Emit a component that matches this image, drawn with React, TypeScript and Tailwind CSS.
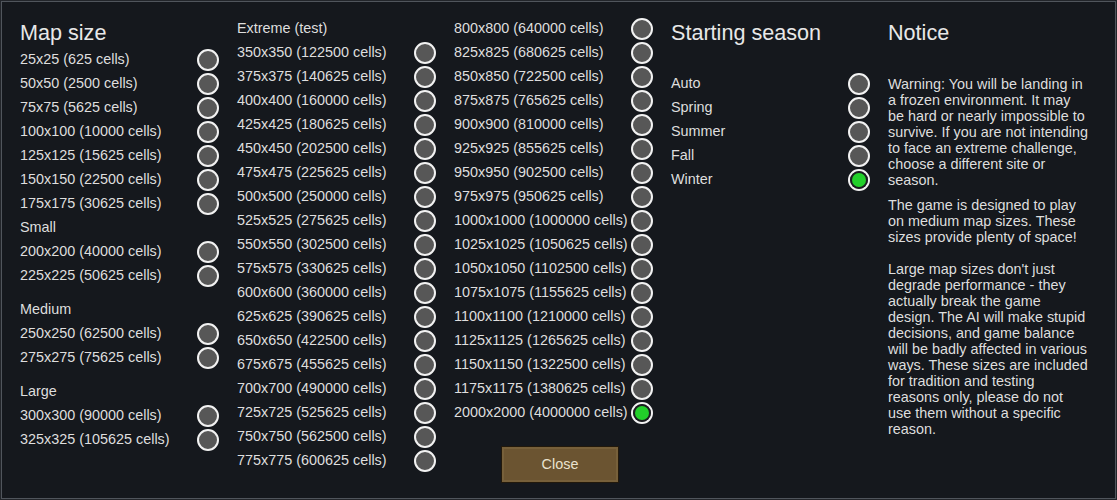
import React from "react";

type Row =
  | { kind: "opt"; label: string; on?: boolean }
  | { kind: "label"; label: string; gapTop?: boolean };

const SMALL_SIZES: Row[] = [
  { kind: "opt", label: "25x25 (625 cells)" },
  { kind: "opt", label: "50x50 (2500 cells)" },
  { kind: "opt", label: "75x75 (5625 cells)" },
  { kind: "opt", label: "100x100 (10000 cells)" },
  { kind: "opt", label: "125x125 (15625 cells)" },
  { kind: "opt", label: "150x150 (22500 cells)" },
  { kind: "opt", label: "175x175 (30625 cells)" },
  { kind: "label", label: "Small" },
  { kind: "opt", label: "200x200 (40000 cells)" },
  { kind: "opt", label: "225x225 (50625 cells)" },
  { kind: "label", label: "Medium", gapTop: true },
  { kind: "opt", label: "250x250 (62500 cells)" },
  { kind: "opt", label: "275x275 (75625 cells)" },
  { kind: "label", label: "Large", gapTop: true },
  { kind: "opt", label: "300x300 (90000 cells)" },
  { kind: "opt", label: "325x325 (105625 cells)" },
];

const cells = (n: number) => `${n}x${n} (${n * n} cells)`;

const EXTREME_A: Row[] = [
  { kind: "label", label: "Extreme (test)" },
  ...Array.from({ length: 18 }, (_, i) => ({ kind: "opt" as const, label: cells(350 + i * 25) })),
];

const EXTREME_B: Row[] = [
  ...Array.from({ length: 16 }, (_, i) => ({ kind: "opt" as const, label: cells(800 + i * 25) })),
  { kind: "opt", label: cells(2000), on: true },
];

const SEASONS = ["Auto", "Spring", "Summer", "Fall", "Winter"];

function Radio({ on }: { on?: boolean }) {
  return (
    <span className="flex h-[22px] w-[22px] items-center justify-center rounded-full border-2 border-[#f2f2f2] bg-[#575757]">
      {on && <span className="h-[14px] w-[14px] rounded-full bg-[#22d02a] ring-2 ring-[#1b1d20]" />}
    </span>
  );
}

function Rows({ rows }: { rows: Row[] }) {
  return (
    <>
      {rows.map((r, i) =>
        r.kind === "label" ? (
          <div key={i} className={`flex h-6 items-center ${r.gapTop ? "mt-[10px]" : ""}`}>
            {r.label}
          </div>
        ) : (
          <div key={i} className="flex h-6 items-center justify-between">
            <span>{r.label}</span>
            <Radio on={r.on} />
          </div>
        )
      )}
    </>
  );
}

function Heading({ children }: { children: React.ReactNode }) {
  return <div className="h-[31px] text-[21.6px] leading-[31px] text-[#e8e8e8]">{children}</div>;
}

export default function App() {
  return (
    <div className="h-[500px] w-[1117px] bg-[#22252a] p-px font-['Liberation_Sans',Arial,sans-serif]">
      <div className="flex h-full gap-[18px] border border-[#50555c] bg-[#15181d] pl-[18px] pt-[15px] text-[14.4px] text-[#dedede]">
        {/* Map sizes */}
        <div className="flex w-[199px] flex-col">
          <Heading>Map size</Heading>
          <Rows rows={SMALL_SIZES} />
        </div>

        {/* Extreme sizes */}
        <div className="flex w-[199px] flex-col">
          <Rows rows={EXTREME_A} />
        </div>

        <div className="flex w-[199px] flex-col">
          <Rows rows={EXTREME_B} />
          <button className="ml-[47px] mt-[21px] h-[37px] w-[118px] border border-[#22190c] bg-[#6b5431] text-[14.4px] text-[#eae2cf] shadow-[inset_0_0_0_2px_#77603a]">
            Close
          </button>
        </div>

        {/* Season */}
        <div className="flex w-[199px] flex-col">
          <Heading>Starting season</Heading>
          <div className="h-6" />
          <Rows rows={SEASONS.map((s) => ({ kind: "opt" as const, label: s, on: s === "Winter" }))} />
        </div>

        {/* Notice */}
        <div className="flex w-[201px] flex-col leading-4">
          <Heading>Notice</Heading>
          <p className="mt-[28px]">
            Warning: You will be landing in a frozen environment. It may be hard or nearly impossible to
            survive. If you are not intending to face an extreme challenge, choose a different site or
            season.
          </p>
          <p className="mt-[9px] whitespace-pre-line">
            {"The game is designed to play on medium map sizes. These sizes provide plenty of space!\n\nLarge map sizes don't just degrade performance - they actually break the game design. The AI will make stupid decisions, and game balance will be badly affected in various ways. These sizes are included for tradition and testing reasons only, please do not use them without a specific reason."}
          </p>
        </div>
      </div>
    </div>
  );
}
